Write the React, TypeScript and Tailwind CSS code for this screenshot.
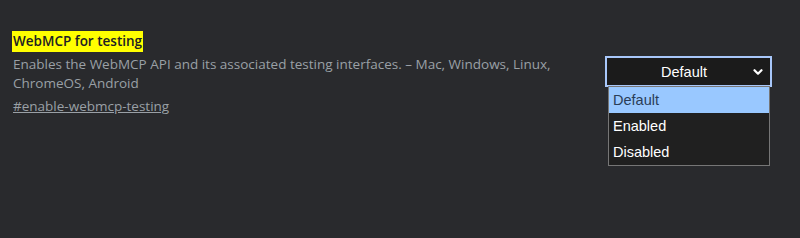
import React from 'react';

const OPTIONS = ['Default', 'Enabled', 'Disabled'];

const Chevron = () => (
  <svg viewBox="0 0 10 6" className="h-[6px] w-[10px]" aria-hidden="true">
    <path d="M1.5 1.2l3.5 3.5 3.5-3.5" fill="none" stroke="#ffffff" strokeWidth="2.2" strokeLinecap="round" strokeLinejoin="round" />
  </svg>
);

export default function App() {
  return (
    <div className="h-[238px] w-[800px] bg-[#292a2d] font-['Open_Sans',sans-serif]">
      <div className="flex justify-between pl-[12px] pr-[28px] pt-[28px]">
        <div className="w-[560px]">
          <h2 className="inline-block bg-[#ffff00] px-[1px] text-[13.5px] font-semibold leading-[21px] text-[#202124]">
            WebMCP for testing
          </h2>
          <p className="mt-[3px] pl-[1px] text-[13.5px] leading-[19px] text-[#9aa0a6]">
            Enables the WebMCP API and its associated testing interfaces. – Mac, Windows, Linux, ChromeOS, Android
          </p>
          <a className="mt-[4px] inline-block pl-[1px] text-[13.5px] leading-[19px] text-[#9aa0a6] underline">
            #enable-webmcp-testing
          </a>
        </div>
        <div className="relative mt-[28px] w-[167px]">
          <div className="flex h-[31px] items-center border-2 border-[#a8c7fa] bg-[#1b1b1b] pl-[8px] pr-[7px] pt-[3px] font-['Liberation_Sans',sans-serif] text-[14.5px] text-white">
            <span className="flex-1 text-center">Default</span>
            <span className="-mt-[3px]">
              <Chevron />
            </span>
          </div>
          <div className="absolute left-[3px] right-[2px] top-[30px] border border-[#767676] bg-[#202020] font-['Liberation_Sans',sans-serif] text-[14.5px]">
            {OPTIONS.map((o, i) => (
              <div
                key={o}
                className={
                  i === 0
                    ? 'flex h-[26px] items-center bg-[#99c8ff] px-[4px] pt-[2px] text-[#2a3d57]'
                    : 'flex h-[26px] items-center px-[4px] pt-[2px] text-white'
                }
              >
                {o}
              </div>
            ))}
          </div>
        </div>
      </div>
    </div>
  );
}
